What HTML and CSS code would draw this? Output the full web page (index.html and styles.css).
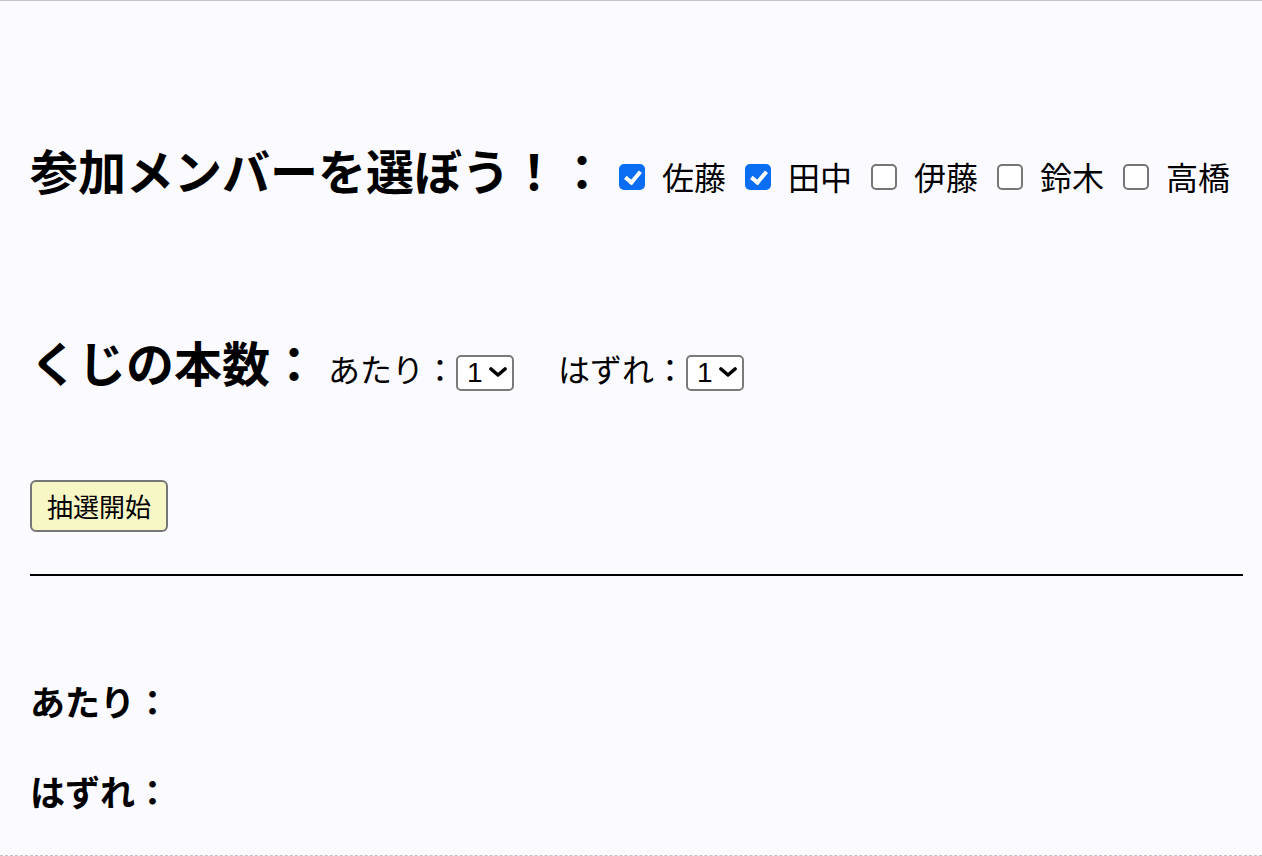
FILE: index.html
```html
<!DOCTYPE html>
<html lang="ja">
<head>
<meta charset="utf-8">
<title>くじ引き</title>
<link rel="stylesheet" href="styles.css">
</head>
<body>
<div class="page">
  <div class="row row-members">
    <h2 class="title">参加メンバーを選ぼう！：</h2>
    <div class="members">
      <label class="member"><input type="checkbox" class="cb" checked><span>佐藤</span></label><label class="member"><input type="checkbox" class="cb" checked><span>田中</span></label><label class="member"><input type="checkbox" class="cb"><span>伊藤</span></label><label class="member"><input type="checkbox" class="cb"><span>鈴木</span></label><label class="member"><input type="checkbox" class="cb"><span>高橋</span></label>
    </div>
  </div>

  <div class="row row-count">
    <h2 class="title">くじの本数：</h2>
    <span class="field-label first">あたり：</span>
    <span class="select-wrap">
      <select class="sel"><option>1</option><option>2</option><option>3</option></select>
      <svg class="chev" width="18" height="10" viewBox="0 0 18 10"><path d="M2 2 L9 8 L16 2" fill="none" stroke="#000" stroke-width="3.6" stroke-linecap="round" stroke-linejoin="round"/></svg>
    </span>
    <span class="field-label second">はずれ：</span>
    <span class="select-wrap">
      <select class="sel"><option>1</option><option>2</option><option>3</option></select>
      <svg class="chev" width="18" height="10" viewBox="0 0 18 10"><path d="M2 2 L9 8 L16 2" fill="none" stroke="#000" stroke-width="3.6" stroke-linecap="round" stroke-linejoin="round"/></svg>
    </span>
  </div>

  <button class="start" type="button">抽選開始</button>

  <hr class="rule">

  <h3 class="result result-hit">あたり：</h3>
  <h3 class="result result-miss">はずれ：</h3>
</div>
</body>
</html>
```

FILE: styles.css
```css
html, body {
  margin: 0;
  padding: 0;
  background: #fbfbff;
}

.page {
  box-sizing: border-box;
  min-height: 856px;
  padding: 0 19px 0 30px;
  border-top: 1px solid #c2c2c8;
  border-bottom: 1px dashed #c2c2c2;
  font-family: "Noto Sans CJK JP", "Noto Sans", sans-serif;
  color: #000;
  display: flex;
  flex-direction: column;
  align-items: flex-start;
}

.row {
  display: flex;
  align-items: baseline;
}

.row-members {
  margin-top: 144px;
}

.row-count {
  margin-top: 144px;
}

.title {
  margin: 0;
  font-size: 48px;
  line-height: 48px;
  font-weight: 700;
  white-space: nowrap;
}

.members {
  margin-left: 13px;
  font-size: 32px;
  line-height: 32px;
  white-space: nowrap;
}

.member {
  margin-right: 19px;
}

.cb {
  -webkit-appearance: none;
  appearance: none;
  position: relative;
  box-sizing: border-box;
  width: 26px;
  height: 26px;
  margin: 0 17px 0 0;
  border: 2px solid #767676;
  border-radius: 5px;
  background: #fff;
  vertical-align: baseline;
}

.cb:checked {
  background: #0b6df2;
  border-color: #0b6df2;
}

.cb:checked::after {
  content: "";
  position: absolute;
  left: 7px;
  top: 2px;
  width: 6px;
  height: 12px;
  border-right: 4px solid #fff;
  border-bottom: 4px solid #fff;
  transform: rotate(40deg);
}

.field-label {
  font-size: 32px;
  line-height: 32px;
  white-space: nowrap;
}

.field-label.first {
  margin-left: 10px;
}

.field-label.second {
  margin-left: 44px;
}

.select-wrap {
  position: relative;
  display: inline-flex;
}

.sel {
  -webkit-appearance: none;
  appearance: none;
  box-sizing: border-box;
  width: 58px;
  height: 36px;
  padding: 0 0 0 9px;
  border: 2px solid #7a7a7a;
  border-radius: 5px;
  background: #fff;
  color: #000;
  font-family: "Liberation Sans", Arial, sans-serif;
  font-size: 28px;
}

.chev {
  position: absolute;
  right: 7px;
  top: 12px;
  pointer-events: none;
}

.start {
  margin-top: 89px;
  box-sizing: border-box;
  height: 52px;
  padding: 0 15px;
  border: 2px solid #767676;
  border-radius: 6px;
  background: #f7f7c6;
  color: #000;
  font-family: "Noto Sans CJK JP", sans-serif;
  font-size: 26px;
  line-height: 30px;
}

.rule {
  align-self: stretch;
  margin: 42px 0 0 0;
  height: 2px;
  border: 0;
  background: #000;
}

.result {
  margin: 0;
  font-size: 35px;
  line-height: 35px;
  font-weight: 700;
}

.result-hit {
  margin-top: 107px;
}

.result-miss {
  margin-top: 55px;
}
```
